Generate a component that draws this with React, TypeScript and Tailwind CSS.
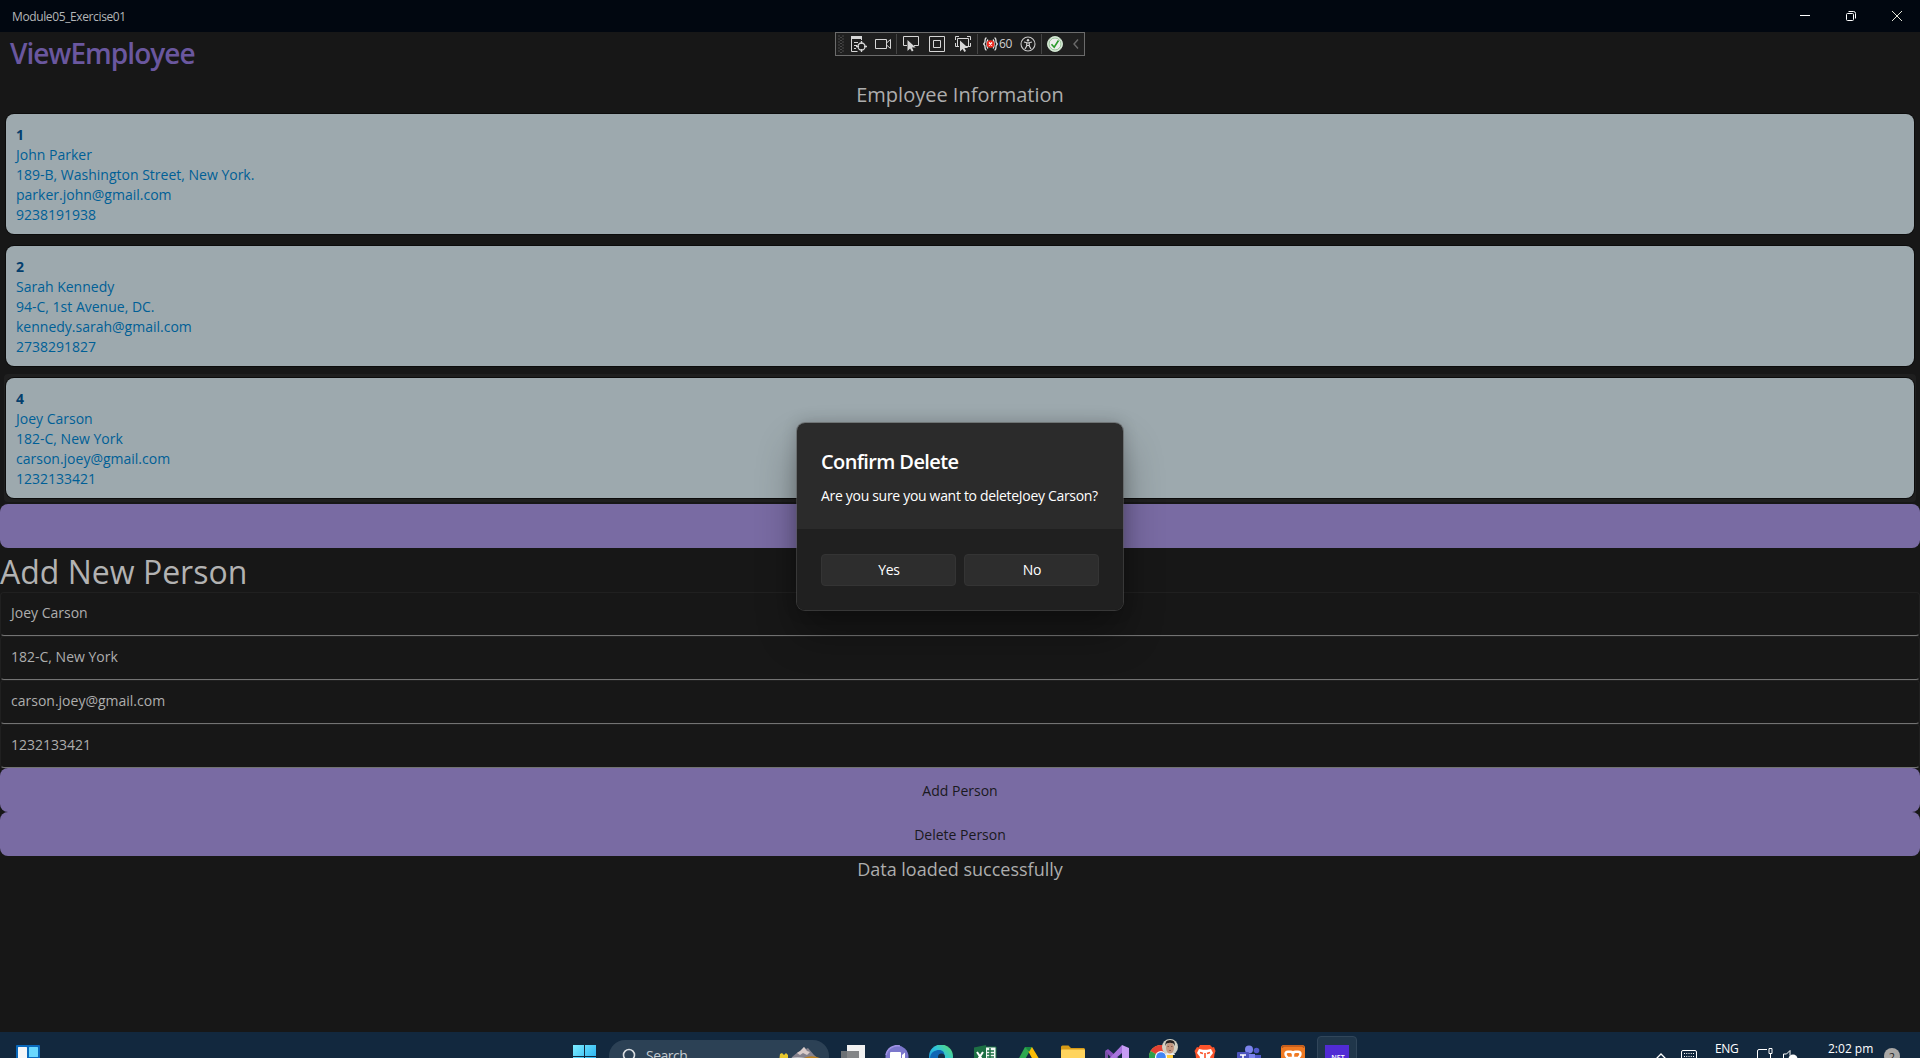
import type { ReactNode } from "react";

const people = [
  { id: "1", lines: ["John Parker", "189-B, Washington Street, New York.", "parker.john@gmail.com", "9238191938"] },
  { id: "2", lines: ["Sarah Kennedy", "94-C, 1st Avenue, DC.", "kennedy.sarah@gmail.com", "2738291827"] },
  { id: "4", lines: ["Joey Carson", "182-C, New York", "carson.joey@gmail.com", "1232133421"], selected: true },
];

function Icon({ className = "", w = 16, h = 16, children }: { className?: string; w?: number; h?: number; children: ReactNode }) {
  return (
    <svg className={`block shrink-0 ${className}`} width={w} height={h} viewBox={`0 0 ${w} ${h}`} fill="none">
      {children}
    </svg>
  );
}

function TitleBar() {
  return (
    <div className="flex h-8 shrink-0 items-center bg-[#010710] pl-3 text-[12px] text-[#b4b6b8]">
      <span className="pt-[2px] tracking-[-0.38px]">Module05_Exercise01</span>
      <div className="ml-auto flex">
        <div className="flex w-[46px] justify-center">
          <Icon w={10} h={10}><path d="M0 4.5h10" stroke="#fff" /></Icon>
        </div>
        <div className="flex w-[46px] justify-center">
          <Icon w={10} h={10}>
            <rect x=".5" y="2.5" width="7" height="7" rx="1" stroke="#fff" />
            <path d="M2.5.5h5a2 2 0 0 1 2 2v5" stroke="#fff" />
          </Icon>
        </div>
        <div className="flex w-[46px] justify-center">
          <Icon w={10} h={10}><path d="M0 0l10 10M10 0L0 10" stroke="#e4e6d8" /></Icon>
        </div>
      </div>
    </div>
  );
}

const Sep = ({ className = "" }) => <div className={`h-5 w-px shrink-0 bg-[#444] ${className}`} />;
const cursor = "M6 5v11l2.6-2.6 1.8 3.1 1.6-.9-1.6-3h3.8z";

function DebugToolbar() {
  return (
    <div className="absolute top-8 left-[835px] flex h-6 w-[250px] items-center border border-[#6b6b6b] bg-[#1f1f1f]">
      <Icon className="ml-[2px]" w={6} h={18}>
        {[1, 4, 7, 10, 13, 16].map((y) => (
          <path key={y} d={`M0 ${y}h2M4 ${y}h2M2 ${y + 1.5}h2`} stroke="#4a4a4a" />
        ))}
      </Icon>
      <Icon className="ml-[7px]">
        <path d="M0 0h11v3H0z" fill="#d6d6d6" />
        <path d="M.5 3v12.500h6M10.500 3v1M3 6.500h4M3 9.500h3M3 12.500h2" stroke="#d6d6d6" />
        <circle cx="10.500" cy="10.500" r="3.500" stroke="#d6d6d6" strokeWidth="1.300" />
        <path d="M10.500 5v3M10.500 13v3M5 10.500h3M13 10.500h3" stroke="#d6d6d6" strokeWidth="1.300" />
      </Icon>
      <Icon className="ml-2">
        <path d="M.5 3.500h11v9H.5zM11.500 7l4-3.500v9l-4-3.500" stroke="#d6d6d6" />
      </Icon>
      <Sep className="ml-[5px]" />
      <Icon className="ml-[6px]">
        <path d="M4 9.500H.5v-9h15v9H11" stroke="#d6d6d6" />
        <path d={cursor} fill="#d6d6d6" transform="translate(-1.500 -1)" />
      </Icon>
      <Icon className="ml-[10px]">
        <path d="M.5.5h15v15H.5zM4.500 4.500h7v7h-7z" stroke="#d6d6d6" />
      </Icon>
      <Icon className="ml-[10px]">
        <path d="M.5 4V.5H4M12 .5h3.500V4M.5 7v3.500H4M12 10.500h3.500V7M4 10.500H2.500v-8h11v8H11" stroke="#d6d6d6" />
        <path d={cursor} fill="#d6d6d6" transform="translate(-1 -.5)" />
      </Icon>
      <Sep className="ml-[6px]" />
      <Icon className="ml-[5px]">
        <path d="M3.500 2C1.500 2 2.300 5 1.800 6.500L.7 8l1.100 1.500C2.300 11 1.500 14 3.500 14M11.500 2c2 0 1.200 3 1.700 4.500L14.300 8l-1.100 1.500c-.5 1.500.3 4.500-1.700 4.500M5 3.500C3.500 5 3.500 11 5 12.500M10 3.500c1.500 1.500 1.500 7.500 0 9" stroke="#e4e4e4" strokeWidth="1.300" />
        <circle cx="7.500" cy="8" r="3.800" fill="#ef2b20" />
        <path d="M6 6.500l3 3M9 6.500l-3 3" stroke="#fff" strokeWidth="1.300" />
      </Icon>
      <span className="w-[21px] text-[12px] leading-4 text-[#d0d0d0] tracking-[-0.4px]">60</span>
      <Icon>
        <circle cx="8" cy="8" r="7" stroke="#c8c8c8" strokeWidth="1.100" />
        <circle cx="8" cy="4.200" r="1.200" fill="#d6d6d6" />
        <path d="M4 6l4 1 4-1M6.700 7v3L5 13M9.300 7v3l1.700 3M6.700 9.500h2.600" stroke="#d6d6d6" strokeWidth="1.100" />
      </Icon>
      <Sep className="ml-[5px]" />
      <Icon className="ml-[5px]">
        <circle cx="8" cy="8" r="7.500" fill="#eee" stroke="#c9e2c9" />
        <circle cx="8" cy="8" r="6" stroke="#78b878" strokeWidth=".8" />
        <path d="M4.500 8.200l2.700 3L11.500 4.500" stroke="#2a9a2a" strokeWidth="1.600" />
      </Icon>
      <Icon className="ml-[10px]" w={6} h={10}>
        <path d="M5 .5L1 5l4 4.500" stroke="#6a6a6a" strokeWidth="1.400" />
      </Icon>
    </div>
  );
}

function PersonCard({ id, lines, selected }: { id: string; lines: string[]; selected?: boolean }) {
  return (
    <div className="h-[132px] px-1 py-[2px]">
      <div className={`h-[128px] rounded-[4px] px-[2px] py-1 ${selected ? "bg-[#1f1f1f]" : ""}`}>
        <div className="h-[120px] rounded-lg bg-[#9da9ae] px-[10px] pt-[11px] text-[14px] leading-5 text-[#005f96] shadow-[0_0_0_1px_#0c0c0c]">
          <div className="font-bold text-[#053f6d]">{id}</div>
          {lines.map((line) => (
            <div key={line}>{line}</div>
          ))}
        </div>
      </div>
    </div>
  );
}

function Entry({ value }: { value: string }) {
  return (
    <div className="h-11 rounded-[4px] border border-[#202020] border-b-[#737373] px-[10px] pt-[10px] text-[14px] leading-5 text-[#aeaeae]">
      {value}
    </div>
  );
}

function PurpleButton({ label }: { label?: string }) {
  return (
    <div className="flex h-11 shrink-0 items-center justify-center rounded-lg bg-[#796ba3] pt-px text-[14px] text-[#1a1920]">{label}</div>
  );
}

function Dialog() {
  return (
    <div className="absolute top-[423px] left-[797px] w-[326px] rounded-lg text-white shadow-[0_0_0_1px_rgba(90,90,90,0.55),0_24px_40px_rgba(0,0,0,0.32),0_0_16px_rgba(0,0,0,0.2)]">
      <div className="h-[106px] rounded-t-lg bg-[#2b2b2b] px-6 pt-6">
        <h2 className="w-max text-[20px] leading-[30px] font-semibold tracking-[-0.62px]">Confirm Delete</h2>
        <p className="mt-[9px] w-max text-[14px] leading-5 tracking-[-0.31px]">Are you sure you want to deleteJoey Carson?</p>
      </div>
      <div className="flex h-[81px] gap-2 rounded-b-lg bg-[#202020] pt-[25px] pr-6 pl-6">
        {["Yes", "No"].map((label) => (
          <button key={label} className="flex h-8 flex-1 items-center justify-center rounded-[4px] border border-[#343434] bg-[#2d2d2d] pb-px pl-px text-[14px] tracking-[-0.3px]">
            {label}
          </button>
        ))}
      </div>
    </div>
  );
}

const apps: { name: string; art: ReactNode }[] = [
  { name: "task view", art: <><path d="M6 0h18v18H6z" fill="#f1f1f1" /><path d="M0 6h18v18H0z" fill="#77797b" fillOpacity=".9" /></> },
  { name: "chat", art: <><circle cx="12" cy="12" r="11.500" fill="#7b77cc" /><path d="M1 10a11.500 11.500 0 0 1 14-9" stroke="#9f91e4" strokeWidth="1.500" /><rect x="5" y="7" width="11" height="10" rx="1" fill="#fff" /><path d="M17 10l3-2.500v9L17 14z" fill="#fff" /></> },
  { name: "edge", art: <><defs><linearGradient id="edge" x1="0" y1="1" x2="1" y2="0"><stop stopColor="#1283d6" /><stop offset=".55" stopColor="#2fc3dd" /><stop offset="1" stopColor="#60df62" /></linearGradient></defs><circle cx="12" cy="11.500" r="12" fill="url(#edge)" /><path d="M1 14c0-7 5-9 9-9 5 0 6 4 5 7-3-2-7 1-6 6s4 5 4 5C6 23 1 20 1 14z" fill="#0f66b5" /><circle cx="12.500" cy="12" r="3.500" fill="#142d45" /></> },
  { name: "excel", art: <><path d="M9 2h14v20H9z" fill="#f2f8f4" stroke="#1d7044" /><path d="M14 6h7M14 9h7M14 12h7M17 3v16" stroke="#1d7044" strokeWidth="1.500" /><path d="M1 2.500L13 0v24L1 21.500z" fill="#1d7044" /><path d="M4 7l6 9M10 7l-6 9" stroke="#fff" strokeWidth="2" /></> },
  { name: "drive", art: <><path d="M8 2h7l-9.500 17L1 15z" fill="#2da94f" /><path d="M9 2h6l9 15h-7z" fill="#fbbc05" /><path d="M8 2h7l-3 5z" fill="#198a42" /><path d="M6 17h18l-4 6H2z" fill="#3b7ded" /></> },
  { name: "explorer", art: <><path d="M0 2q0-1.500 1.500-1.500h6L10 3h13l1 1v6H0z" fill="#d69a16" /><rect y="4.500" width="24" height="17" rx="1" fill="#ffd45e" /></> },
  { name: "visual studio", art: <><path d="M17 0l7 3v18l-7 3z" fill="#c79cf4" /><path d="M0 6l3-2 14 12v8z" fill="#8a51bf" /><path d="M17 0v8L3 20l-3-2z" fill="#a773dc" /><path d="M0 6l3 2v8l-3 2z" fill="#7850a5" /></> },
  { name: "chrome", art: <><circle cx="12" cy="12" r="12" fill="#ffcc3d" /><path d="M12 12L1.600 6A12 12 0 0 1 22.400 6z" fill="#e34133" /><path d="M12 12L1.600 6A12 12 0 0 0 12 24z" fill="#2c9e4b" /><circle cx="12" cy="12" r="6" fill="#fff" /><circle cx="12" cy="12" r="4.800" fill="#4285f4" /></> },
  { name: "brave", art: <><path d="M7 0h10l2.500 2.500L21 2l1.500 4-1 3-1 8-8.500 7-8.500-7-1-8-1-3L4 2l1.500.5z" fill="#fb542b" /><path d="M6 4l4 .8h4l4-.8 2 4-3 4 1 3-6 5-6-5 1-3-3-4z" fill="#fff" /><path d="M7 7.500l3 1M17 7.500l-3 1M12 8v5M9 15l3-2 3 2" stroke="#fb542b" strokeWidth="1.600" /></> },
  { name: "teams", art: <><circle cx="12" cy="4.500" r="4" fill="#7b83eb" /><circle cx="19.500" cy="5.500" r="2.800" fill="#5059c9" /><path d="M7 9h11v14H7z" fill="#7b83eb" /><path d="M18 10h6v9h-6z" fill="#5059c9" /><rect y="7" width="12" height="12" rx="1" fill="#4b53bc" /><path d="M3 10h6M6 10v7" stroke="#fff" strokeWidth="1.600" /></> },
  { name: "xampp", art: <><rect width="24" height="24" rx="3" fill="#f07a22" /><path d="M1.500 3V2q0-1 2-1h17q2 0 2 1v1" stroke="#b9571b" strokeWidth="1.400" /><path d="M5 19v-4q0-2 2-2h10q2 0 2 2v4M6.500 12.500Q4.500 11 4.500 9t2.500-2.200h2.500Q12 7 12 9.500V13M12 9.500Q12 7 14.500 6.800H17Q19.500 7 19.500 9t-2 3.500" stroke="#fff" strokeWidth="2.400" /></> },
];

function Taskbar() {
  return (
    <div className="relative flex h-12 shrink-0 bg-[#12283e]">
      <Icon className="mt-[13px] ml-4" w={24} h={24}>
        <rect width="24" height="24" rx="1" fill="#0969bc" />
        <rect x="2" y="2" width="9" height="20" rx=".5" fill="#f4f6f8" />
        <rect x="13" y="2" width="9" height="10" rx=".5" fill="#69d8fe" />
        <rect x="13" y="13" width="9" height="9" fill="#2e98e4" />
      </Icon>
      <Icon className="mt-[13px] ml-[533px]" w={23} h={23}>
        <defs><linearGradient id="win" x2="1" y2="1"><stop stopColor="#7cecff" /><stop offset="1" stopColor="#15a4ed" /></linearGradient></defs>
        <path d="M0 0h11v11H0zM12 0h11v11H12zM0 12h11v11H0zM12 12h11v11H12z" fill="url(#win)" />
      </Icon>
      <div className="mt-2 ml-[13px] flex h-8 w-[220px] overflow-hidden rounded-full bg-[#2c4155]">
        <Icon className="mt-2 ml-[13px]" w={16} h={16}>
          <circle cx="7" cy="7" r="5.500" stroke="#d9dde1" strokeWidth="1.600" />
          <path d="M3 11l-3 4" stroke="#d9dde1" strokeWidth="1.600" />
        </Icon>
        <span className="mt-[6px] ml-2 text-[14px] leading-5 text-[#c3cad0] tracking-[-0.5px]">Search</span>
        <Icon className="mt-[5px] ml-auto mr-[8px]" w={42} h={27}>
          <path d="M13 12l6-5 3-1 3-4 2 2 2-1 6 7 5 4v6H13z" fill="#85828d" />
          <path d="M18 8l3-2 4-4 3 4 3 1-3 3-4-2-3 2z" fill="#d9cbc9" />
          <path d="M1 9l2-1 2 2 2-2 2 2v7H0z" fill="#e7c72d" />
          <path d="M6 14q12-2 17 0 8-5 18-1v13H1z" fill="#ba7f1d" />
          <path d="M10 13.500q8-2.500 16-.5L10 24z" fill="#b8b9be" />
        </Icon>
      </div>
      <div className="mt-[13px] ml-3 flex gap-5">
        {apps.map((app) => (
          <div key={app.name} className="relative size-6">
            <Icon w={24} h={24}>{app.art}</Icon>
            {app.name === "chrome" && (
              <Icon className="absolute top-[-6px] left-[13px]" w={16} h={16}>
                <circle cx="8" cy="8" r="8" fill="#d2d0c3" />
                <path d="M3 16c0-3 10-3 10 0" fill="#eee" />
                <ellipse cx="8" cy="9" rx="4" ry="5.500" fill="#c39780" />
                <path d="M3.500 7q-1-6 4.500-6 6 0 4.500 6l-1-2.500-3.500-.7-3.500.7z" fill="#25201f" />
                <path d="M5.500 7.500h1.500M9 7.500h1.500M7 11.500h2" stroke="#7a5044" strokeWidth=".8" />
              </Icon>
            )}
          </div>
        ))}
      </div>
      <div className="mt-1 ml-3 h-10 w-10 rounded-[4px] border border-[#31465a] bg-[#20364a] px-[7px] pt-2">
        <div className="flex size-6 items-center justify-center bg-[#512bd4] text-[7px] leading-none font-semibold text-white">.NET</div>
      </div>
      <div className="ml-auto flex text-[12px] leading-4 text-white">
        <Icon className="mt-[20px]" w={12} h={8}><path d="M1 7l5-5 5 5" stroke="#fff" strokeWidth="1.300" /></Icon>
        <Icon className="mt-[18px] ml-[14px]" w={16} h={14}>
          <rect x=".5" y=".5" width="15" height="12" rx="1.500" stroke="#fff" />
          <path d="M3 3.500h10M3 6.500h10M4 9.500h8" stroke="#fff" strokeDasharray="1 1.250" />
        </Icon>
        <span className="mt-[9px] ml-[18px] w-[23px] tracking-[-0.4px]">ENG</span>
        <Icon className="mt-[16px] ml-[19px]" w={16} h={16}>
          <path d="M10 1.500H2Q.5 1.500.5 3v8q0 1.500 1.500 1.500h9M13.500 6v6M12 .5h3v5h-3zM4 15h7" stroke="#fff" />
        </Icon>
        <Icon className="mt-[18px] ml-[10px]" w={16} h={16}>
          <path d="M.5 4h3L7 .5v5M.5 4v7h3l3.500 3" stroke="#fff" />
          <circle cx="10" cy="9" r="4.500" fill="#fff" /><path d="M7.500 9h5" stroke="#12283e" />
        </Icon>
        <span className="mt-[9px] ml-[29px] w-[44px] whitespace-nowrap">2:02 pm</span>
        <div className="mt-4 mr-5 ml-3 flex size-4 items-center justify-center rounded-full bg-[#a9a7a5] text-[11px] leading-none text-[#222]">2</div>
      </div>
    </div>
  );
}

export default function App() {
  return (
    <div className="relative h-[1058px] w-[1920px] overflow-hidden bg-[#171717] font-['Open_Sans','Noto_Sans',sans-serif]">
      <div className="flex h-[1080px] flex-col">
        <TitleBar />
        <main className="flex flex-1 flex-col">
          <h1 className="h-12 pl-[10px] text-[28px] leading-[43px] font-semibold tracking-[-0.95px] text-[#6a579f]">ViewEmployee</h1>
          <div className="h-7 text-center text-[20px] leading-[30px] text-[#adadad]">Employee Information</div>
          <div>
            {people.map((p) => <PersonCard key={p.id} {...p} />)}
          </div>
          <PurpleButton />
          <h2 className="h-11 text-[32px] leading-[47px] text-[#b2b2b2]">Add New Person</h2>
          <div>
            {["Joey Carson", "182-C, New York", "carson.joey@gmail.com", "1232133421"].map((v) => <Entry key={v} value={v} />)}
          </div>
          <PurpleButton label="Add Person" />
          <PurpleButton label="Delete Person" />
          <div className="text-center text-[18px] leading-[26px] text-[#adadad]">Data loaded successfully</div>
        </main>
        <Taskbar />
      </div>
      <DebugToolbar />
      <Dialog />
    </div>
  );
}
